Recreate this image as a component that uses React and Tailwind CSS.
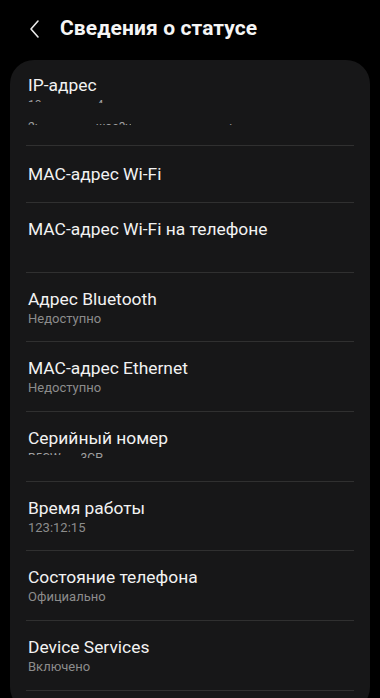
import React from "react";

const font = { fontFamily: "Roboto, 'Noto Sans', sans-serif" };

function Clip({ children, h = 6, className = "" }) {
  return (
    <div className={"overflow-hidden " + className} style={{ height: h }}>
      {children}
    </div>
  );
}

function Row({ title, sub, tight }) {
  return (
    <div>
      <div className={"px-[18px] pt-[15px] " + (tight ? "pb-[13px]" : "pb-[14px]")}>
        <div className="text-[17.4px] leading-[22px] text-[#f2f2f2]">{title}</div>
        <div className="text-[13px] leading-[18px] h-[18px] text-[#8c8c8c]">{sub}</div>
      </div>
      <div className="mx-[16px] h-px bg-[#303030]" />
    </div>
  );
}

export default function App() {
  return (
    <div className="w-[380px] h-[698px] bg-black overflow-hidden" style={font}>
      <div className="h-[60px] flex items-center pl-[28px]">
        <svg width="14" height="20" viewBox="0 0 14 20" className="mr-[18px] -mt-[2px]">
          <polyline points="10,2 3,10 10,18" fill="none" stroke="#e8e8e8" strokeWidth="1.6" strokeLinecap="round" strokeLinejoin="round" />
        </svg>
        <div className="text-[21px] font-bold text-[#f5f5f5] tracking-[0.1px] -mt-[3px]">Сведения о статусе</div>
      </div>
      <div className="mx-[10px] bg-[#171718] rounded-[24px]">
        {/* IP row */}
        <div className="px-[18px] pt-[14px] h-[85px]">
          <div className="text-[17.4px] leading-[22px] text-[#f2f2f2]">IP-адрес</div>
          <div className="flex items-start mt-[2px] text-[12px] leading-[14px] text-[#a0a0a0]">
            <Clip h={4}><span>10.</span></Clip>
            <Clip h={5} className="ml-[52px]"><span>4</span></Clip>
          </div>
          <div className="flex items-start mt-[17px] text-[12px] leading-[14px] text-[#a0a0a0]">
            <Clip h={5}><span>2:</span></Clip>
            <Clip h={5} className="ml-[58px]"><span>шоа3у</span></Clip>
            <Clip h={5} className="ml-[98px]"><span>:</span></Clip>
          </div>
        </div>
        <div className="mx-[16px] h-px bg-[#303030]" />
        <div className="px-[18px] h-[56px] flex items-center">
          <div className="text-[17.4px] leading-[22px] text-[#f2f2f2]">MAC-адрес Wi-Fi</div>
        </div>
        <div className="mx-[16px] h-px bg-[#303030]" />
        <Row title="MAC-адрес Wi-Fi на телефоне" sub="" />
        <Row title="Адрес Bluetooth" sub="Недоступно" tight />
        <Row title="MAC-адрес Ethernet" sub="Недоступно" />
        <div>
          <div className="px-[18px] pt-[15px] h-[69px]">
            <div className="text-[17.4px] leading-[22px] text-[#f2f2f2]">Серийный номер</div>
            <div className="flex items-start mt-[2px] text-[12px] leading-[14px] text-[#a0a0a0]">
              <Clip h={4}><span>R5CW</span></Clip>
              <Clip h={7} className="ml-[20px]"><span>3CP</span></Clip>
            </div>
          </div>
          <div className="mx-[16px] h-px bg-[#303030]" />
        </div>
        <Row title="Время работы" sub="123:12:15" tight />
        <Row title="Состояние телефона" sub="Официально" />
        <Row title="Device Services" sub="Включено" />
        <div className="h-[20px]" />
      </div>
    </div>
  );
}
